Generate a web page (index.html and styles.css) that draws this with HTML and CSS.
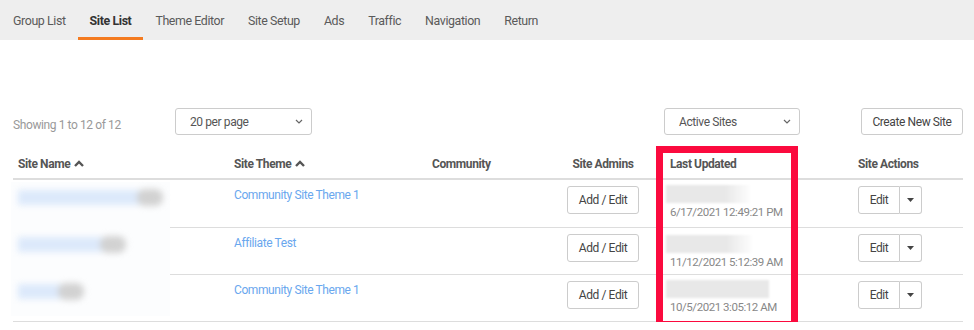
FILE: index.html
```html
<!DOCTYPE html>
<html lang="en">
<head>
<meta charset="UTF-8" />
<title>Site List</title>
<link rel="stylesheet" href="styles.css">
</head>
<body>

  <nav class="tabs">
    <a class="tab">Group List</a>
    <a class="tab active">Site List</a>
    <a class="tab">Theme Editor</a>
    <a class="tab">Site Setup</a>
    <a class="tab">Ads</a>
    <a class="tab">Traffic</a>
    <a class="tab">Navigation</a>
    <a class="tab">Return</a>
  </nav>

  <main class="page">
    <div class="toolbar">
      <span class="count">Showing 1 to 12 of 12</span>
      <div class="select per-page">
        <span>20 per page</span>
        <svg class="chev" width="8" height="5" viewBox="0 0 8 5"><path d="M1 1l3 3 3-3" fill="none" stroke="#666" stroke-width="1.2"/></svg>
      </div>
      <div class="spacer"></div>
      <div class="select status">
        <span>Active Sites</span>
        <svg class="chev" width="8" height="5" viewBox="0 0 8 5"><path d="M1 1l3 3 3-3" fill="none" stroke="#666" stroke-width="1.2"/></svg>
      </div>
      <button class="btn create">Create New Site</button>
    </div>

    <div class="table-wrap">
      <table class="sites">
        <colgroup>
          <col style="width:216px">
          <col style="width:198px">
          <col style="width:114px">
          <col style="width:124px">
          <col style="width:188px">
          <col style="width:110px">
        </colgroup>
        <thead>
          <tr>
            <th>Site Name <svg class="sort" width="10" height="7" viewBox="0 0 10 7"><path d="M1 6l4-4 4 4" fill="none" stroke="#555" stroke-width="2.4"/></svg></th>
            <th>Site Theme <svg class="sort" width="10" height="7" viewBox="0 0 10 7"><path d="M1 6l4-4 4 4" fill="none" stroke="#555" stroke-width="2.4"/></svg></th>
            <th>Community</th>
            <th class="center">Site Admins</th>
            <th>Last Updated</th>
            <th>Site Actions</th>
          </tr>
        </thead>
        <tbody>
          <tr>
            <td></td>
            <td><a class="link">Community Site Theme 1</a></td>
            <td></td>
            <td class="center"><button class="btn">Add / Edit</button></td>
            <td class="updated"><div class="smear w1"></div><div class="date">6/17/2021 12:49:21 PM</div></td>
            <td><div class="split"><button class="btn">Edit</button><button class="btn caret"><svg width="7" height="4" viewBox="0 0 7 4"><path d="M0 0h7L3.5 4z" fill="#444"/></svg></button></div></td>
          </tr>
          <tr>
            <td></td>
            <td><a class="link">Affiliate Test</a></td>
            <td></td>
            <td class="center"><button class="btn">Add / Edit</button></td>
            <td class="updated second"><div class="smear w2"></div><div class="date">11/12/2021 5:12:39 AM</div></td>
            <td><div class="split"><button class="btn">Edit</button><button class="btn caret"><svg width="7" height="4" viewBox="0 0 7 4"><path d="M0 0h7L3.5 4z" fill="#444"/></svg></button></div></td>
          </tr>
          <tr>
            <td></td>
            <td><a class="link">Community Site Theme 1</a></td>
            <td></td>
            <td class="center"><button class="btn">Add / Edit</button></td>
            <td class="updated"><div class="smear w3"></div><div class="date">10/5/2021 3:05:12 AM</div></td>
            <td><div class="split"><button class="btn">Edit</button><button class="btn caret"><svg width="7" height="4" viewBox="0 0 7 4"><path d="M0 0h7L3.5 4z" fill="#444"/></svg></button></div></td>
          </tr>
        </tbody>
      </table>

      <!-- blurred site names -->
      <div class="redact">
        <div class="smudge" style="width:145px"><span class="ink" style="width:128px"></span><span class="blob"></span></div>
        <div class="smudge" style="width:108px"><span class="ink" style="width:88px"></span><span class="blob"></span></div>
        <div class="smudge" style="width:66px"><span class="ink" style="width:46px"></span><span class="blob"></span></div>
      </div>

      <div class="highlight"></div>
    </div>
  </main>

</body>
</html>
```

FILE: styles.css
```css
html, body {
  margin: 0;
  padding: 0;
  background: #fff;
  font-family: 'Roboto', sans-serif;
  letter-spacing: -0.4px;
  color: #555;
}

.tabs {
  display: flex;
  height: 40px;
  background: #eeeeee;
  padding-left: 1px;
}

.tab {
  display: flex;
  align-items: center;
  padding: 3px 12px 0;
  font-size: 12.4px;
  color: #5a5a5a;
  border-bottom: 3px solid transparent;
  box-sizing: border-box;
}

.tab.active {
  font-weight: 700;
  color: #333;
  border-bottom-color: #f47b20;
}

.page {
  padding: 68px 11px 0 13px;
}

.toolbar {
  display: flex;
  align-items: center;
  height: 27px;
}

.count {
  width: 162px;
  font-size: 12px;
  color: #999;
  padding-top: 7px;
}

.select {
  display: flex;
  align-items: center;
  justify-content: space-between;
  box-sizing: border-box;
  height: 27px;
  padding: 0 8px 0 14px;
  border: 1px solid #ccc;
  border-radius: 3px;
  font-size: 12px;
  color: #555;
}

.per-page { width: 137px; }
.status { width: 136px; }

.spacer { flex: 1; }

.btn {
  font-family: inherit;
  letter-spacing: inherit;
  font-size: 12px;
  color: #444;
  background: #fff;
  border: 1px solid #ccc;
  border-radius: 3px;
  height: 28px;
  padding: 0 11px;
  cursor: pointer;
}

.create {
  margin-left: 61px;
  width: 102px;
  height: 27px;
  padding: 0;
}

.table-wrap {
  position: relative;
  margin-top: 12px;
}

.sites {
  width: 950px;
  table-layout: fixed;
  border-collapse: collapse;
  font-size: 12px;
}

.sites th {
  height: 32px;
  padding: 2px 5px 0;
  text-align: left;
  font-weight: 700;
  color: #555;
  border-bottom: 2px solid #ddd;
  box-sizing: border-box;
}

.sites td {
  height: 47px;
  padding: 6px 5px 0;
  vertical-align: top;
  border-bottom: 1px solid #ddd;
  box-sizing: border-box;
}

.sites tbody tr:first-child td { height: 48px; }

.sites .center { text-align: center; }

.sites td .link {
  display: inline-block;
  margin-top: 1px;
}

.sort {
  vertical-align: 1px;
  margin-left: 1px;
}

.link {
  color: #6aa7ee;
  line-height: 16px;
}

.sites td.updated {
  padding-top: 5px;
  padding-left: 1px;
}

.sites td.updated.second { padding-top: 7px; }

.smear {
  height: 18px;
  background: linear-gradient(to right, #e8e8e8 70%, #fdfdfd);
  filter: blur(1px);
}

.w1 { width: 84px; }
.w2 { width: 86px; }
.w3 { width: 103px; background: #e8e8e8; }

.date {
  color: #888;
  font-size: 11.5px;
  letter-spacing: -0.45px;
  line-height: 16px;
  margin-top: 1px;
  padding-left: 4px;
}

.split {
  display: flex;
}

.split .btn {
  border-radius: 3px 0 0 3px;
  width: 42px;
  padding: 0;
}

.split .caret {
  width: 22px;
  border-left: none;
  border-radius: 0 3px 3px 0;
  display: flex;
  align-items: center;
  justify-content: center;
}

.redact {
  position: absolute;
  left: -2px;
  top: 35px;
  width: 159px;
  height: 134px;
  background: #fcfdfe;
  display: flex;
  flex-direction: column;
  gap: 30px;
  padding: 7px 0 0 7px;
  box-sizing: border-box;
}

.smudge {
  position: relative;
  height: 17px;
  filter: blur(3px);
}

.smudge .ink {
  position: absolute;
  left: 0;
  top: 1px;
  height: 15px;
  background: #dce9fb;
}

.smudge .blob {
  position: absolute;
  right: 0;
  top: 0;
  width: 26px;
  height: 17px;
  border-radius: 8px;
  background: #d2d2d2;
}

.highlight {
  position: absolute;
  left: 643px;
  top: -1px;
  width: 142px;
  height: 182px;
  border: 7px solid #fb0a3e;
  box-sizing: border-box;
}
```
